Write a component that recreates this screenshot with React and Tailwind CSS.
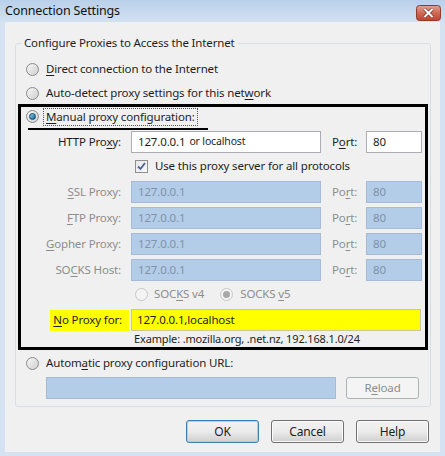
import React from 'react';

const font = { fontFamily: '"Segoe UI", "Noto Sans", "Open Sans", sans-serif' };

function Radio({ checked, disabled }) {
  return (
    <span
      className={`relative inline-flex h-[13px] w-[13px] shrink-0 items-center justify-center rounded-full border ${
        disabled ? 'border-[#c8c8c8] bg-[#f4f4f4]' : 'border-[#8a8a8a] bg-gradient-to-br from-[#f6f6f6] to-[#d0d0d0]'
      }`}
    >
      {checked && (
        <span
          className={`h-[7px] w-[7px] rounded-full ${
            disabled ? 'bg-[#a8a8a8]' : 'bg-gradient-to-br from-[#8ad4f5] to-[#0d5f8e] border border-[#0b4a73]'
          }`}
        />
      )}
    </span>
  );
}

function Checkbox() {
  return (
    <span className="inline-flex h-[13px] w-[13px] shrink-0 items-center justify-center border border-[#8e8f8f] bg-gradient-to-br from-[#e6e6e6] to-[#fafafa]">
      <svg width="9" height="9" viewBox="0 0 9 9">
        <path d="M1 4.5 L3.5 7 L8 1" fill="none" stroke="#4a5f97" strokeWidth="1.8" />
      </svg>
    </span>
  );
}

function U({ children }) {
  return <span className="underline underline-offset-2">{children}</span>;
}

function ProxyRow({ label, host, disabled }) {
  const labelColor = disabled ? 'text-[#8d8d8d]' : 'text-[#1e1e1e]';
  const boxCls = disabled
    ? 'bg-[#b3cce8] border-[#a4bcd8] text-[#8093aa]'
    : 'bg-white border-[#abadb3] text-[#1e1e1e]';
  return (
    <div className="flex h-[22px] items-center">
      <div className={`w-[101px] whitespace-nowrap pr-[1px] text-right ${labelColor}`}>{label}</div>
      <div className={`ml-[9px] flex h-full w-[190px] items-center whitespace-nowrap border px-[6px] ${boxCls}`}>{host}</div>
      <div className={`ml-[11px] w-[34px] ${labelColor}`}>
        P{disabled ? <>o<U>r</U>t:</> : <><U>o</U>rt:</>}
      </div>
      <div className={`flex h-full w-[56px] items-center border px-[6px] ${boxCls}`}>80</div>
    </div>
  );
}

function Button({ children, focused }) {
  return (
    <button
      className={`flex h-[23px] w-[73px] items-center justify-center rounded-[3px] border text-[12px] text-[#1e1e1e] bg-gradient-to-b from-[#f2f2f2] via-[#ebebeb] to-[#cfcfcf] ${
        focused ? 'border-[#3c7fb1] shadow-[inset_0_0_0_1px_#9fd5f3]' : 'border-[#707070] shadow-[inset_0_0_0_1px_#fbfbfb]'
      }`}
    >
      {children}
    </button>
  );
}

export default function App() {
  return (
    <div className="flex h-[456px] w-[445px] flex-col overflow-hidden bg-[#d5e2f1] text-[11.5px] tracking-[-0.15px] text-[#1e1e1e]" style={font}>
      {/* Title bar */}
      <div className="flex h-[22px] shrink-0 items-center justify-between bg-gradient-to-b from-[#b9d0ea] to-[#d3e1f1] pl-[5px] pr-[4px]">
        <span className="text-[12.5px] text-[#111]">Connection Settings</span>
        <svg width="25" height="16" viewBox="0 0 25 16" className="mt-[3px]">
          <defs>
            <linearGradient id="cls" x1="0" y1="0" x2="0" y2="1">
              <stop offset="0" stopColor="#e3a496" />
              <stop offset="0.5" stopColor="#cf6a55" />
              <stop offset="1" stopColor="#c0422c" />
            </linearGradient>
          </defs>
          <rect x="0.5" y="0.5" width="24" height="15" rx="3" fill="url(#cls)" stroke="#8d3b2e" />
          <path d="M8.5 4 L16.5 12 M16.5 4 L8.5 12" stroke="#6b2a20" strokeWidth="3.2" />
          <path d="M8.5 4 L16.5 12 M16.5 4 L8.5 12" stroke="#fff" strokeWidth="2" />
        </svg>
      </div>

      {/* Client area */}
      <div className="mx-[5px] mb-[4px] flex flex-1 flex-col bg-[#f0f0f0]">
        <fieldset className="ml-[10px] mr-[9px] mt-[13px] rounded-[3px] border border-[#d5dfe5] pb-[7px]">
          <legend className="ml-[5px] px-[3px] leading-[16px]">Configure Proxies to Access the Internet</legend>
          <div className="flex flex-col pt-[9px]">
            <div className="flex h-[18px] items-center gap-[7px] pl-[10px]">
              <Radio />
              <span><U>D</U>irect connection to the Internet</span>
            </div>
            <div className="mt-[6px] flex h-[18px] items-center gap-[7px] pl-[10px]">
              <Radio />
              <span>Auto-detect proxy settings for this net<U>w</U>ork</span>
            </div>

            {/* Highlighted manual section */}
            <div className="ml-[2px] mt-[2px] w-[410px] border-[3px] border-black">
              <div className="flex h-[19px] items-center gap-[4px] pl-[5px]">
                <Radio checked />
                <span className="border border-dotted border-[#555] px-[2px] leading-[16px]">
                  <U>M</U>anual proxy configuration:
                </span>
              </div>
              <div className="ml-[7px] mt-[2px] h-[2px] w-[180px] bg-black" />
              <div className="mt-[1px]">
                <ProxyRow
                  label={<>HTTP Pro<U>x</U>y:</>}
                  host={<><span>127.0.0.1</span><span className="ml-[4px] text-[10.5px]">or localhost</span></>}
                />
              </div>
              <div className="mt-[2px] flex h-[22px] items-center gap-[7px] pl-[114px]">
                <Checkbox />
                <span>Use this proxy server for all protocols</span>
              </div>
              <div className="mt-[4px] flex flex-col gap-[4px]">
                <ProxyRow disabled label={<><U>S</U>SL Proxy:</>} host="127.0.0.1" />
                <ProxyRow disabled label={<><U>F</U>TP Proxy:</>} host="127.0.0.1" />
                <ProxyRow disabled label={<><U>G</U>opher Proxy:</>} host="127.0.0.1" />
                <ProxyRow disabled label={<>SO<U>C</U>KS Host:</>} host="127.0.0.1" />
              </div>
              <div className="mt-[4px] flex h-[18px] items-center pl-[114px] text-[#8d8d8d]">
                <Radio disabled />
                <span className="ml-[6px]">SOC<U>K</U>S v4</span>
                <span className="ml-[16px]"><Radio checked disabled /></span>
                <span className="ml-[7px]">SOCKS <U>v</U>5</span>
              </div>
              <div className="mt-[6px] flex h-[22px] items-center">
                <div className="ml-[29px] flex h-[21px] w-[79px] items-center justify-end whitespace-nowrap bg-[#ffff00] pr-[7px]">
                  <span><U>N</U>o Proxy for:</span>
                </div>
                <div className="ml-[2px] flex h-full w-[290px] items-center border border-[#c9c9a0] bg-[#ffff00] px-[5px]">
                  127.0.0.1,localhost
                </div>
              </div>
              <div className="flex h-[16px] items-center whitespace-nowrap pl-[113px] text-[11px]">
                Example: .mozilla.org, .net.nz, 192.168.1.0/24
              </div>
            </div>

            <div className="mt-[4px] flex h-[18px] items-center gap-[7px] pl-[10px]">
              <Radio />
              <span>Autom<U>a</U>tic proxy configuration URL:</span>
            </div>
            <div className="mt-[5px] flex h-[22px] items-center pl-[30px]">
              <div className="h-full w-[290px] border border-[#a4bcd8] bg-[#b3cce8]" />
              <div className="ml-[10px] flex h-full w-[73px] items-center justify-center rounded-[3px] border border-[#adb2b5] bg-[#f4f4f4] text-[#8d8d8d]">
                R<U>e</U>load
              </div>
            </div>
          </div>
        </fieldset>

        <div className="mr-[11px] mt-[13px] flex justify-end gap-[12px]">
          <Button focused>OK</Button>
          <Button>Cancel</Button>
          <Button>Help</Button>
        </div>
      </div>
    </div>
  );
}
